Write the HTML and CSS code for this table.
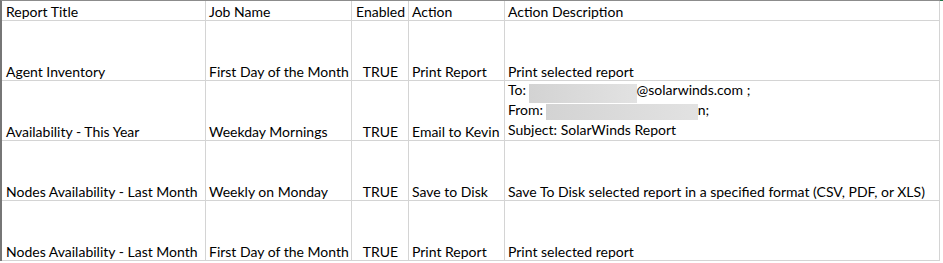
FILE: index.html
```html
<!DOCTYPE html>
<html lang="en">
<head>
<meta charset="utf-8">
<title>Report Jobs</title>
<link rel="stylesheet" href="styles.css">
</head>
<body>
<div class="page">
  <div class="sheet">
    <div class="cell hd">Report Title</div>
    <div class="cell hd">Job Name</div>
    <div class="cell hd">Enabled</div>
    <div class="cell hd">Action</div>
    <div class="cell hd">Action Description</div>

    <div class="cell">Agent Inventory</div>
    <div class="cell">First Day of the Month</div>
    <div class="cell bool">TRUE</div>
    <div class="cell">Print Report</div>
    <div class="cell">Print selected report</div>

    <div class="cell">Availability - This Year</div>
    <div class="cell">Weekday Mornings</div>
    <div class="cell bool">TRUE</div>
    <div class="cell">Email to Kevin</div>
    <div class="cell multi">
      <div class="ln">To: <span class="redact r-to"></span>@solarwinds.com ;</div>
      <div class="ln">From: <span class="redact r-from"></span>n;</div>
      <div class="ln">Subject: SolarWinds Report</div>
    </div>

    <div class="cell">Nodes Availability - Last Month</div>
    <div class="cell">Weekly on Monday</div>
    <div class="cell bool">TRUE</div>
    <div class="cell">Save to Disk</div>
    <div class="cell">Save To Disk selected report in a specified format (CSV, PDF, or XLS)</div>

    <div class="cell">Nodes Availability - Last Month</div>
    <div class="cell">First Day of the Month</div>
    <div class="cell bool">TRUE</div>
    <div class="cell">Print Report</div>
    <div class="cell">Print selected report</div>
  </div>
  <div class="edge"></div>
</div>
</body>
</html>
```

FILE: styles.css
```css
html, body {
  margin: 0;
  padding: 0;
  background: #ffffff;
}

body {
  font-family: "Lato", "Liberation Sans", sans-serif;
  font-size: 14px;
  color: #000000;
}

.page {
  display: flex;
  align-items: flex-start;
}

.sheet {
  display: grid;
  grid-template-columns: 204px 146px 57px 96px 435px;
  grid-template-rows: 20px 60px 60px 60px 60px;
  border-top: 1px solid #8c8c8c;
  border-left: 2px solid #767676;
}

.edge {
  width: 3px;
  height: 0;
  border-top: 1px solid #217346;
}

.cell {
  box-sizing: border-box;
  border-right: 1px solid #d4d4d4;
  border-bottom: 1px solid #d4d4d4;
  padding: 0 3px 0 4px;
  display: flex;
  align-items: flex-end;
  line-height: 17px;
  white-space: nowrap;
  overflow: visible;
}

.cell:nth-child(5n+2),
.cell:nth-child(5n+4),
.cell:nth-child(5n) {
  padding-left: 3px;
}

.bool {
  justify-content: center;
}

.multi {
  flex-direction: column;
  align-items: flex-start;
  justify-content: flex-end;
}

.ln {
  line-height: 20px;
  height: 20px;
}

.redact {
  display: inline-block;
  background: linear-gradient(90deg, #d3d3d3 0%, #dcdcdc 60%, #e2e2e2 100%);
  margin-left: -1px;
}

.r-to {
  width: 108px;
  height: 19px;
  vertical-align: -8px;
}

.r-from {
  width: 152px;
  height: 16px;
  vertical-align: -5px;
}
```
